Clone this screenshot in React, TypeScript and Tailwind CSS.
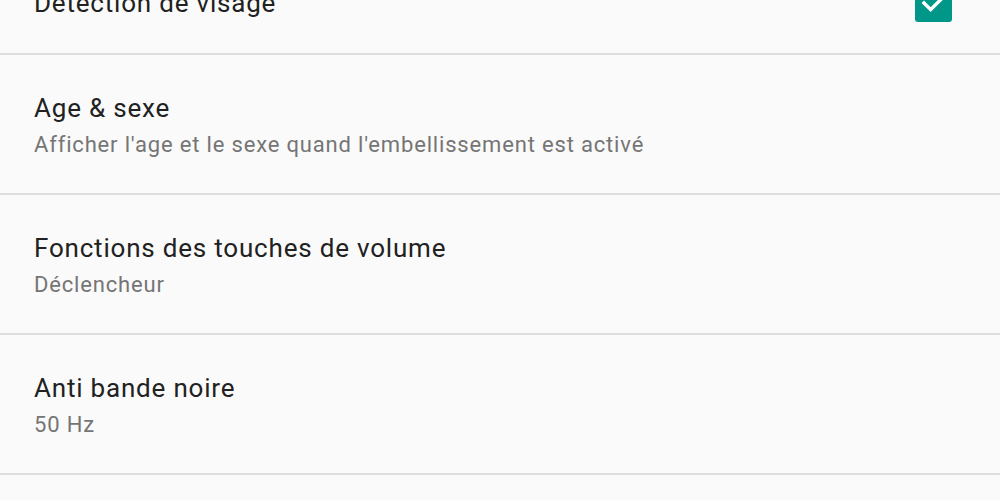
import React from 'react';

type Setting = {
    title: string;
    summary?: string;
    checked?: boolean;
};

const settings: Setting[] = [
    { title: 'Détection de visage', checked: true },
    { title: 'Age & sexe', summary: "Afficher l'age et le sexe quand l'embellissement est activé" },
    { title: 'Fonctions des touches de volume', summary: 'Déclencheur' },
    { title: 'Anti bande noire', summary: '50 Hz' },
];

function Checkbox() {
    return (
        <div className="w-[37px] h-[37px] rounded-[3px] bg-[#009688] flex items-center justify-center">
            <svg width="32" height="32" viewBox="0 0 24 24" fill="none">
                <path d="M4.5 12l5 5 10-10" stroke="#ffffff" strokeWidth="2.6" strokeLinecap="square" />
            </svg>
        </div>
    );
}

export default function App() {
    return (
        <div
            className="w-[1000px] h-[500px] overflow-hidden bg-[#fafafa]"
            style={{ fontFamily: 'Roboto, "Liberation Sans", sans-serif' }}
        >
            <div className="-mt-[47px]">
                {settings.map((s, i) =>
                    s.summary ? (
                        <div key={i} className="h-[140px] border-b-2 border-[#dedede] pl-[34px] pr-[48px] pt-[37px]">
                            <div className="text-[26px] leading-[32px] tracking-[0.8px] text-[#212121]">{s.title}</div>
                            <div className="mt-[7px] text-[22px] leading-[28px] tracking-[0.83px] text-[#757575]">{s.summary}</div>
                        </div>
                    ) : (
                        <div key={i} className="h-[102px] border-b-2 border-[#dedede] pl-[34px] pr-[48px] flex items-center justify-between">
                            <div className="text-[26px] leading-[32px] tracking-[0.8px] text-[#212121]">{s.title}</div>
                            {s.checked && <Checkbox />}
                        </div>
                    )
                )}
            </div>
        </div>
    );
}
